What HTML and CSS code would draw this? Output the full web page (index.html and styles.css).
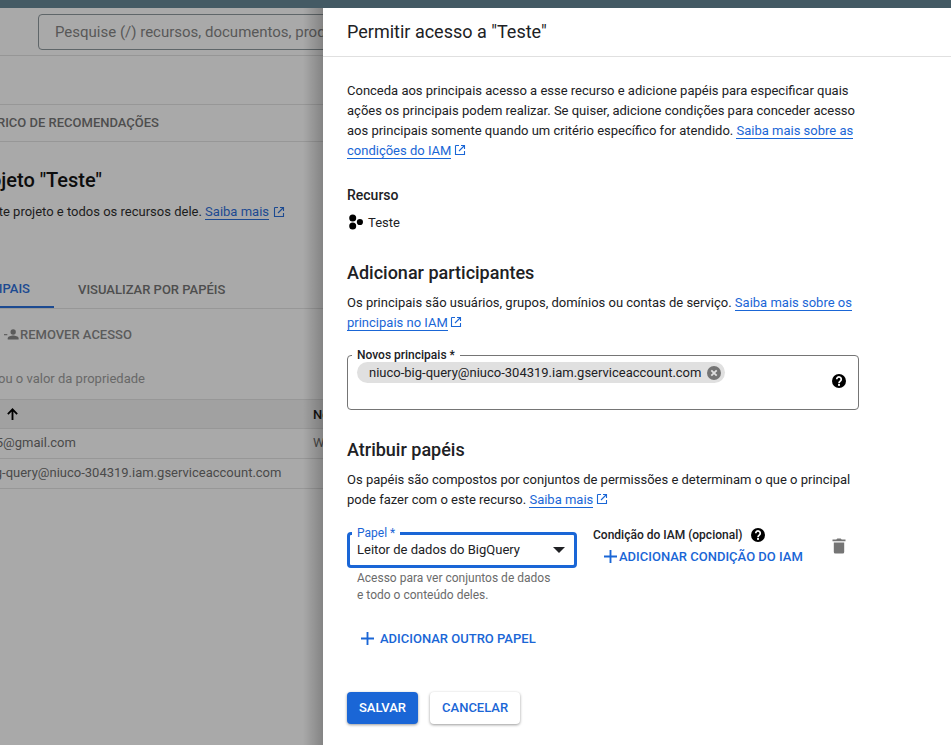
FILE: index.html
```html
<!DOCTYPE html>
<html lang="pt-BR">
<head>
<meta charset="utf-8">
<title>Permitir acesso a "Teste"</title>
<link rel="stylesheet" href="styles.css">
</head>
<body>
<div class="topbar"></div>
<div class="main">
  <div class="backdrop">
    <div class="search-row"><div class="search">Pesquise (/) recursos, documentos, produtos e muito mais</div></div>
    <div class="subtabs"><span class="subtab-text">HISTÓRICO DE RECOMENDAÇÕES</span></div>
    <div class="page-title"><span>Permissões do projeto "Teste"</span></div>
    <p class="page-desc"><span>Estas permissões afetam este projeto e todos os recursos dele. <span class="bd-link">Saiba mais</span></span>
      <svg class="ext" viewBox="0 0 12 12"><path d="M1.5 1.5h3.5M1.5 1.5v9h9V7M7 1.5h3.5V5M10.5 1.5 5 7" fill="none" stroke="currentColor" stroke-width="1.1"/></svg></p>
    <div class="tabs">
      <div class="tab active"><span>VISUALIZAR POR PRINCIPAIS</span></div>
      <div class="tab">VISUALIZAR POR PAPÉIS</div>
    </div>
    <div class="actions">
      <svg class="remove-icon" viewBox="0 0 18 14"><path d="M0 6.5h4v1.4H0z"/><circle cx="11" cy="4" r="3.2"/><path d="M4.5 13v-1.5c0-2.2 4.3-3.3 6.500-3.300s6.500 1.100 6.500 3.300V13z"/></svg>
      <span>REMOVER ACESSO</span>
    </div>
    <div class="filter"><span>Filtrar por nome ou o valor da propriedade</span></div>
    <div class="thead">
      <svg class="arrow" viewBox="0 0 14 14"><path d="M7 13V2M2 6.500 7 1.500l5 5" fill="none" stroke="currentColor" stroke-width="2"/></svg>
      <b class="th-name">Nome</b>
    </div>
    <div class="trow"><span class="cell-a">exemplo.5@gmail.com</span><span class="cell-b">Wagner</span></div>
    <div class="trow"><span class="cell-c">niuco-big-query@niuco-304319.iam.gserviceaccount.com</span></div>
    <div class="shade"></div>
  </div>

  <aside class="panel">
    <header class="panel-head">Permitir acesso a "Teste"</header>
    <div class="panel-body">
      <p class="text">Conceda aos principais acesso a esse recurso e adicione papéis para especificar quais ações os principais podem realizar. Se quiser, adicione condições para conceder acesso aos principais somente quando um critério específico for atendido. <a class="link">Saiba mais sobre as condições do IAM</a> <svg class="ext blue" viewBox="0 0 12 12"><path d="M1.500 1.500h3.500M1.500 1.500v9h9V7M7 1.500h3.500V5M10.500 1.500 5 7" fill="none" stroke="currentColor" stroke-width="1.100"/></svg></p>

      <h3 class="label-head">Recurso</h3>
      <div class="resource">
        <svg class="res-icon" viewBox="0 0 14 16"><circle cx="3.700" cy="3.900" r="3.500"/><circle cx="3.700" cy="12.100" r="3.500"/><circle cx="10.900" cy="8" r="3.100"/></svg>
        <span>Teste</span>
      </div>

      <h2 class="section">Adicionar participantes</h2>
      <p class="text">Os principais são usuários, grupos, domínios ou contas de serviço. <a class="link">Saiba mais sobre os principais no IAM</a> <svg class="ext blue" viewBox="0 0 12 12"><path d="M1.500 1.500h3.500M1.500 1.500v9h9V7M7 1.500h3.500V5M10.500 1.500 5 7" fill="none" stroke="currentColor" stroke-width="1.100"/></svg></p>

      <div class="field-principals">
        <span class="float-label">Novos principais *</span>
        <span class="chip">niuco-big-query@niuco-304319.iam.gserviceaccount.com
          <svg class="chip-x" viewBox="0 0 14 14"><circle cx="7" cy="7" r="7" fill="#757575"/><path d="M4.300 4.300l5.400 5.400M9.700 4.300l-5.400 5.400" stroke="#e0e0e0" stroke-width="1.800"/></svg>
        </span>
        <svg class="help help-abs" viewBox="0 0 24 24"><use href="#help"/></svg>
      </div>

      <h2 class="section section-roles">Atribuir papéis</h2>
      <p class="text">Os papéis são compostos por conjuntos de permissões e determinam o que o principal pode fazer com o este recurso. <a class="link">Saiba mais</a> <svg class="ext blue" viewBox="0 0 12 12"><path d="M1.500 1.500h3.500M1.500 1.500v9h9V7M7 1.500h3.500V5M10.500 1.500 5 7" fill="none" stroke="currentColor" stroke-width="1.100"/></svg></p>

      <div class="role-row">
        <div class="role-col">
          <div class="select">
            <span class="float-label focus">Papel *</span>
            <span>Leitor de dados do BigQuery</span>
            <span class="caret"></span>
          </div>
          <p class="hint">Acesso para ver conjuntos de dados<br>e todo o conteúdo deles.</p>
        </div>
        <div class="cond-col">
          <div class="cond-title"><span>Condição do IAM (opcional)</span>
            <svg class="help" viewBox="0 0 24 24"><use href="#help"/></svg>
          </div>
          <a class="text-btn cond-btn"><svg class="plus" viewBox="0 0 14 14"><path d="M0 6h14v2H0zM6 0h2v14H6z"/></svg>ADICIONAR CONDIÇÃO DO IAM</a>
        </div>
        <svg class="trash" viewBox="0 0 14 16"><path d="M1.800 4.500h10.400V14a1.500 1.500 0 0 1-1.500 1.500H3.300A1.500 1.500 0 0 1 1.800 14zM.5 1.500h3.800l1-1h3.400l1 1h3.800v1.800H.5z"/></svg>
      </div>

      <a class="text-btn add-role"><svg class="plus" viewBox="0 0 14 14"><path d="M0 6h14v2H0zM6 0h2v14H6z"/></svg>ADICIONAR OUTRO PAPEL</a>

      <div class="buttons">
        <button class="btn primary">SALVAR</button>
        <button class="btn secondary">CANCELAR</button>
      </div>
    </div>
  </aside>
</div>
<svg class="defs" width="0" height="0"><defs><symbol id="help" viewBox="0 0 24 24"><circle cx="12" cy="12" r="10.500"/><path d="M8.600 9.400a3.400 3.400 0 1 1 5.400 2.700c-1.300 1-2 1.500-2 3.100" fill="none" stroke="#fff" stroke-width="2.600"/><rect x="10.600" y="16.500" width="2.800" height="2.800" fill="#fff"/></symbol></defs></svg>
</body>
</html>
```
FILE: styles.css
```css
* { box-sizing: border-box; }
html, body { margin: 0; height: 100%; }
body {
  width: 951px;
  height: 745px;
  overflow: hidden;
  font-family: Roboto, "Liberation Sans", sans-serif;
  color: #202124;
  background: #fff;
  display: flex;
  flex-direction: column;
}
.defs { position: absolute; }
.topbar { height: 8px; background: #445a64; flex: none; }
.main { flex: 1; display: flex; min-height: 0; }

/* Dimmed page behind the panel */
.backdrop {
  position: relative;
  flex: 0 0 323px;
  overflow: hidden;
  background: #a9a9a9;
  color: #4e4e4e;
  font-size: 13px;
  white-space: nowrap;
}
.shade {
  position: absolute;
  top: 0; right: 0; bottom: 0;
  width: 20px;
  background: linear-gradient(to right, rgba(0,0,0,0), rgba(0,0,0,.22));
}
.search-row {
  height: 48px;
  padding: 6px 0 0 38px;
  border-bottom: 1px solid #969696;
  overflow: hidden;
}
.search {
  width: 520px;
  height: 36px;
  border: 1px solid #5f6669;
  border-radius: 4px;
  padding-left: 16px;
  font-size: 15px;
  line-height: 34px;
  color: #585858;
}
.subtabs {
  margin-top: 48px;
  height: 38px;
  padding-bottom: 2px;
  border-top: 1px solid #979797;
  border-bottom: 1px solid #979797;
  display: flex;
  align-items: center;
  justify-content: flex-end;
}
.subtab-text { font-weight: 500; font-size: 13px; margin-right: 164px; }
.page-title {
  margin-top: 25px;
  height: 26px;
  display: flex;
  justify-content: flex-end;
  width: 102px;
  font-size: 20px;
  font-weight: 500;
  line-height: 26px;
  color: #0d0d0d;
}
.page-desc {
  margin: 9px 0 0;
  width: 285px;
  height: 20px;
  line-height: 20px;
  display: flex;
  justify-content: flex-end;
  align-items: center;
  gap: 4px;
  color: #1c1c1c;
}
.bd-link { color: #1c4a91; border-bottom: 1px solid #1c4a91; }
.ext { width: 12px; height: 12px; flex: none; vertical-align: -1px; color: #1c4a91; }
.ext.blue { color: #1a66d6; margin-left: -1px; }
.tabs {
  margin-top: 47px;
  height: 40px;
  border-bottom: 1px solid #979797;
  display: flex;
  font-size: 13px;
  font-weight: 500;
}
.tab { display: flex; align-items: center; height: 39px; padding-top: 2px; margin-left: 24px; }
.tab.active {
  width: 54px;
  margin-left: 0;
  justify-content: flex-end;
  padding-right: 24px;
  color: #1c4a91;
  border-bottom: 2px solid #1c4a91;
}
.actions {
  height: 50px;
  display: flex;
  align-items: center;
  padding-left: 4px;
  font-weight: 500;
  font-size: 13px;
  color: #5b5b5b;
}
.remove-icon { width: 15px; height: 13px; fill: #5b5b5b; margin-right: 1px; }
.filter {
  margin-top: 10px;
  height: 20px;
  width: 145px;
  display: flex;
  justify-content: flex-end;
  color: #686868;
  line-height: 20px;
}
.thead {
  margin-top: 10px;
  height: 30px;
  background: #a1a1a1;
  border-top: 1px solid #979797;
  border-bottom: 1px solid #979797;
  display: flex;
  align-items: center;
  justify-content: space-between;
  padding-left: 6px;
  color: #000;
}
.arrow { width: 13px; height: 13px; }
.th-name { width: 10px; overflow: hidden; font-size: 13px; font-weight: 500; color: #111; }
.trow {
  height: 30px;
  padding-bottom: 2px;
  border-bottom: 1px solid #979797;
  display: flex;
  align-items: center;
  justify-content: space-between;
  color: #4a4a4a;
}
.cell-a { margin-left: -57px; }
.cell-b { width: 10px; overflow: hidden; }
.cell-c { margin-left: -51px; }

/* Side panel */
.panel {
  flex: 1;
  background: #fff;
  min-width: 0;
  display: flex;
  flex-direction: column;
}
.panel-head {
  height: 49px;
  flex: none;
  padding: 0 24px 2px;
  display: flex;
  align-items: center;
  font-size: 18px;
  color: #202124;
  border-bottom: 1px solid #e0e0e0;
}
.panel-body { padding: 24px 96px 0 24px; }
.text { margin: 0; font-size: 13px; line-height: 20px; color: #202124; }
.link { color: #1a66d6; border-bottom: 1px solid #1a66d6; }
.label-head { margin: 24px 0 0; font-size: 14px; font-weight: 500; line-height: 20px; }
.resource {
  margin-top: 7px;
  padding-left: 2px;
  height: 20px;
  display: flex;
  align-items: center;
  gap: 5px;
  font-size: 13px;
}
.res-icon { width: 14px; height: 16px; }
.section { margin: 29px 0 8px; font-size: 18px; font-weight: 500; line-height: 24px; color: #202124; }
.section-roles { margin-top: 28px; }
.field-principals {
  position: relative;
  margin: 22px -4px 0 0;
  height: 55px;
  border: 1px solid #757575;
  border-radius: 4px;
  padding: 6px 9px;
  width: 512px;
}
.float-label {
  position: absolute;
  top: -8px;
  left: 4px;
  padding: 0 5px;
  background: #fff;
  font-size: 12px;
  font-weight: 500;
  line-height: 14px;
  color: #202124;
}
.chip {
  display: inline-flex;
  align-items: center;
  height: 21px;
  padding: 0 4px 0 12px;
  gap: 6px;
  border-radius: 11px;
  background: #e0e0e0;
  font-size: 13px;
  color: #202124;
}
.chip-x { width: 14px; height: 14px; }
.help { width: 16px; height: 16px; fill: #000; flex: none; }
.help-abs { position: absolute; top: 17px; right: 11px; }
.role-row { display: flex; margin-top: 17px; }
.role-col { width: 230px; flex: none; padding-top: 5px; }
.select {
  position: relative;
  height: 36px;
  border: 3px solid #1a66d6;
  border-radius: 4px;
  padding: 5px 0 0 7px;
  font-size: 13px;
  line-height: 20px;
  display: flex;
  justify-content: space-between;
}
.float-label.focus { color: #1a66d6; top: -9px; left: 2px; font-weight: 400; }
.caret {
  width: 0; height: 0;
  margin: 7px 9px 0 0;
  border-left: 6px solid transparent;
  border-right: 6px solid transparent;
  border-top: 6px solid #202124;
}
.hint { margin: 2px 0 0 10px; font-size: 12px; line-height: 17px; color: #6b6b6b; }
.cond-col { margin-left: 16px; width: 222px; flex: none; }
.cond-title {
  display: flex;
  align-items: center;
  gap: 8px;
  font-size: 12px;
  font-weight: 500;
  height: 16px;
}
.text-btn {
  display: flex;
  align-items: center;
  color: #1a66d6;
  font-size: 13px;
  font-weight: 500;
  height: 20px;
}
.cond-btn { margin: 3px 0 0 11px; gap: 2px; }
.plus { width: 13px; height: 13px; fill: #1a66d6; flex: none; }
.trash { width: 14px; height: 16px; fill: #757575; margin: 11px 0 0 17px; flex: none; }
.add-role { margin: 24px 0 0 14px; gap: 6px; }
.buttons { margin-top: 44px; display: flex; gap: 12px; }
.btn {
  height: 32px;
  border: 0;
  border-radius: 4px;
  font: 500 13px Roboto, "Liberation Sans", sans-serif;
  padding: 0 12px 2px;
  box-shadow: 0 1px 3px rgba(0,0,0,.4);
}
.primary { background: #1a66d6; color: #fff; }
.secondary { background: #fff; color: #1a66d6; }
```
